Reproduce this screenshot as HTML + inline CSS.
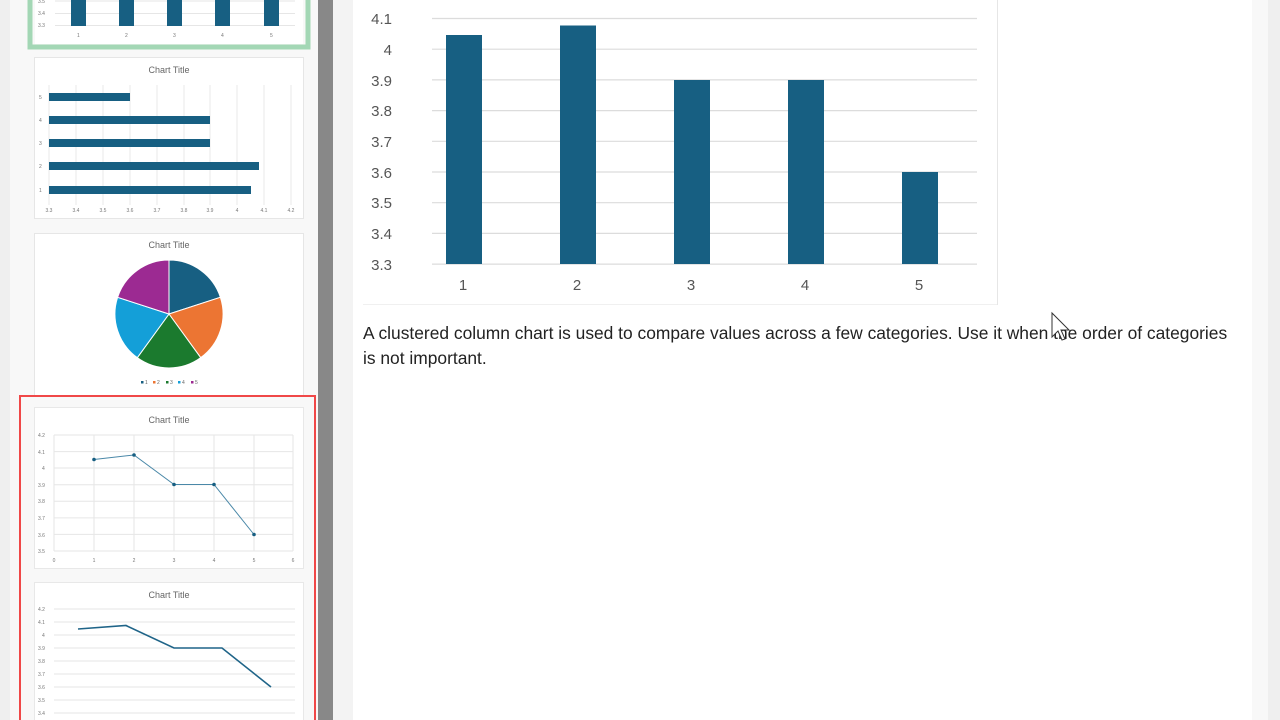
<!DOCTYPE html>
<html><head><meta charset="utf-8"><style>
html,body{margin:0;padding:0;width:1280px;height:720px;overflow:hidden;background:#fff}
svg{position:absolute;left:0;top:0}
p{position:absolute;left:363px;top:321px;width:900px;margin:0;font-family:"Liberation Sans",sans-serif;font-size:17.4px;line-height:25px;color:#222;white-space:nowrap}
</style></head><body>
<svg width="1280" height="720" font-family="Liberation Sans, sans-serif">
<rect x="0" y="0" width="10" height="720" fill="#efefef"/>
<rect x="10" y="0" width="308" height="720" fill="#f8f8f8"/>
<rect x="318" y="0" width="15" height="720" fill="#888"/>
<rect x="333" y="0" width="20" height="720" fill="#f3f3f3"/>
<rect x="1252" y="0" width="16" height="720" fill="#f8f8f8"/>
<rect x="1268" y="0" width="12" height="720" fill="#efefef"/>

<rect x="30" y="-10" width="278" height="57" fill="none" stroke="#a3d7b5" stroke-width="5"/>
<rect x="35" y="-5" width="268" height="49" fill="#fff"/>
<g stroke="#e6e6e6" stroke-width="1"><line x1="55" y1="1" x2="295" y2="1"/><line x1="55" y1="13.5" x2="295" y2="13.5"/><line x1="55" y1="25.5" x2="295" y2="25.5"/></g>
<g fill="#175f82"><rect x="71" y="0" width="15" height="26"/><rect x="119" y="0" width="15" height="26"/><rect x="167" y="0" width="15" height="26"/><rect x="215" y="0" width="15" height="26"/><rect x="264" y="0" width="15" height="26"/></g>
<g font-size="5" fill="#777"><text x="38" y="3">3.5</text><text x="38" y="15">3.4</text><text x="38" y="27">3.3</text>
<text x="77" y="37">1</text><text x="125" y="37">2</text><text x="173" y="37">3</text><text x="221" y="37">4</text><text x="270" y="37">5</text></g>

<rect x="34.5" y="57.5" width="269" height="161" fill="#fff" stroke="#e6e6e6"/>
<text x="169" y="73" font-size="9" fill="#666" text-anchor="middle">Chart Title</text>
<g stroke="#e8e8e8"><line x1="76" y1="85" x2="76" y2="205"/><line x1="103" y1="85" x2="103" y2="205"/><line x1="130" y1="85" x2="130" y2="205"/><line x1="157" y1="85" x2="157" y2="205"/><line x1="184" y1="85" x2="184" y2="205"/><line x1="210" y1="85" x2="210" y2="205"/><line x1="237" y1="85" x2="237" y2="205"/><line x1="264" y1="85" x2="264" y2="205"/><line x1="291" y1="85" x2="291" y2="205"/><line x1="49" y1="85" x2="49" y2="205"/></g>
<g fill="#175f82"><rect x="49" y="93" width="81" height="8"/><rect x="49" y="116" width="161" height="8"/><rect x="49" y="139" width="161" height="8"/><rect x="49" y="162" width="210" height="8"/><rect x="49" y="186" width="202" height="8"/></g>
<g font-size="5" fill="#777"><text x="39" y="99">5</text><text x="39" y="122">4</text><text x="39" y="145">3</text><text x="39" y="168">2</text><text x="39" y="192">1</text></g>
<g font-size="5" fill="#777" text-anchor="middle"><text x="49" y="212">3.3</text><text x="76" y="212">3.4</text><text x="103" y="212">3.5</text><text x="130" y="212">3.6</text><text x="157" y="212">3.7</text><text x="184" y="212">3.8</text><text x="210" y="212">3.9</text><text x="237" y="212">4</text><text x="264" y="212">4.1</text><text x="291" y="212">4.2</text></g>

<rect x="34.5" y="233.5" width="269" height="162" fill="#fff" stroke="#e6e6e6"/>
<text x="169" y="248" font-size="9" fill="#666" text-anchor="middle">Chart Title</text>
<g stroke="#fff" stroke-width="1">
<path d="M169 314 L169 260 A54 54 0 0 1 220.4 297.3Z" fill="#175f82"/>
<path d="M169 314 L220.4 297.3 A54 54 0 0 1 200.7 357.7Z" fill="#ec7533"/>
<path d="M169 314 L200.7 357.7 A54 54 0 0 1 137.3 357.7Z" fill="#1b7a2e"/>
<path d="M169 314 L137.3 357.7 A54 54 0 0 1 117.6 297.3Z" fill="#149fd8"/>
<path d="M169 314 L117.6 297.3 A54 54 0 0 1 169 260Z" fill="#9c2a92"/></g>
<g font-size="5" fill="#666"><rect x="141" y="381" width="2.5" height="2.5" fill="#175f82"/><text x="145" y="384">1</text><rect x="153" y="381" width="2.5" height="2.5" fill="#ec7533"/><text x="157" y="384">2</text><rect x="166" y="381" width="2.5" height="2.5" fill="#1b7a2e"/><text x="170" y="384">3</text><rect x="178" y="381" width="2.5" height="2.5" fill="#149fd8"/><text x="182" y="384">4</text><rect x="191" y="381" width="2.5" height="2.5" fill="#9c2a92"/><text x="195" y="384">5</text></g>

<rect x="20" y="396" width="295" height="330" fill="none" stroke="#f04848" stroke-width="2"/>
<rect x="34.5" y="407.5" width="269" height="161" fill="#fff" stroke="#e8e8e8"/>
<text x="169" y="423" font-size="9" fill="#666" text-anchor="middle">Chart Title</text>
<g stroke="#e6e6e6"><line x1="54" y1="435" x2="293" y2="435"/><line x1="54" y1="451.6" x2="293" y2="451.6"/><line x1="54" y1="468" x2="293" y2="468"/><line x1="54" y1="484.7" x2="293" y2="484.7"/><line x1="54" y1="501.3" x2="293" y2="501.3"/><line x1="54" y1="517.9" x2="293" y2="517.9"/><line x1="54" y1="534.4" x2="293" y2="534.4"/><line x1="54" y1="551" x2="293" y2="551"/>
<line x1="54" y1="435" x2="54" y2="551"/><line x1="94" y1="435" x2="94" y2="551"/><line x1="134" y1="435" x2="134" y2="551"/><line x1="174" y1="435" x2="174" y2="551"/><line x1="214" y1="435" x2="214" y2="551"/><line x1="254" y1="435" x2="254" y2="551"/><line x1="293" y1="435" x2="293" y2="551"/></g>
<polyline points="94,459.5 134,455 174,484.5 214,484.5 254,534.5" fill="none" stroke="#4a88a8" stroke-width="1"/>
<g fill="#175f82"><circle cx="94" cy="459.5" r="1.8"/><circle cx="134" cy="455" r="1.8"/><circle cx="174" cy="484.5" r="1.8"/><circle cx="214" cy="484.5" r="1.8"/><circle cx="254" cy="534.5" r="1.8"/></g>
<g font-size="5" fill="#777"><text x="38" y="437">4.2</text><text x="38" y="454">4.1</text><text x="42" y="470">4</text><text x="38" y="487">3.9</text><text x="38" y="503">3.8</text><text x="38" y="520">3.7</text><text x="38" y="537">3.6</text><text x="38" y="553">3.5</text></g>
<g font-size="5" fill="#777" text-anchor="middle"><text x="54" y="562">0</text><text x="94" y="562">1</text><text x="134" y="562">2</text><text x="174" y="562">3</text><text x="214" y="562">4</text><text x="254" y="562">5</text><text x="293" y="562">6</text></g>

<rect x="34.5" y="582.5" width="269" height="150" fill="#fff" stroke="#e8e8e8"/>
<text x="169" y="598" font-size="9" fill="#666" text-anchor="middle">Chart Title</text>
<g stroke="#e6e6e6"><line x1="54" y1="609" x2="295" y2="609"/><line x1="54" y1="622" x2="295" y2="622"/><line x1="54" y1="635" x2="295" y2="635"/><line x1="54" y1="648" x2="295" y2="648"/><line x1="54" y1="661" x2="295" y2="661"/><line x1="54" y1="674" x2="295" y2="674"/><line x1="54" y1="687" x2="295" y2="687"/><line x1="54" y1="700" x2="295" y2="700"/><line x1="54" y1="713" x2="295" y2="713"/></g>
<polyline points="78,629 126,625.5 174,648 222,648 271,687" fill="none" stroke="#1f6488" stroke-width="1.6"/>
<g font-size="5" fill="#777"><text x="38" y="611">4.2</text><text x="38" y="624">4.1</text><text x="42" y="637">4</text><text x="38" y="650">3.9</text><text x="38" y="663">3.8</text><text x="38" y="676">3.7</text><text x="38" y="689">3.6</text><text x="38" y="702">3.5</text><text x="38" y="715">3.4</text></g>

<line x1="997.5" y1="0" x2="997.5" y2="305" stroke="#e6e6e6"/>
<line x1="363" y1="304.5" x2="997" y2="304.5" stroke="#f0f0f0"/>
<g stroke="#dcdcdc" stroke-width="1.2"><line x1="432" y1="18.5" x2="977" y2="18.5"/><line x1="432" y1="49.2" x2="977" y2="49.2"/><line x1="432" y1="79.9" x2="977" y2="79.9"/><line x1="432" y1="110.6" x2="977" y2="110.6"/><line x1="432" y1="141.3" x2="977" y2="141.3"/><line x1="432" y1="172" x2="977" y2="172"/><line x1="432" y1="202.7" x2="977" y2="202.7"/><line x1="432" y1="233.4" x2="977" y2="233.4"/><line x1="432" y1="264.1" x2="977" y2="264.1"/></g>
<g fill="#175f82"><rect x="446" y="35" width="36" height="229"/><rect x="560" y="25.5" width="36" height="238.5"/><rect x="674" y="80" width="36" height="184"/><rect x="788" y="80" width="36" height="184"/><rect x="902" y="172" width="36" height="92"/></g>
<g font-size="15" fill="#555" text-anchor="end"><text x="392" y="24">4.1</text><text x="392" y="55">4</text><text x="392" y="86">3.9</text><text x="392" y="116">3.8</text><text x="392" y="147">3.7</text><text x="392" y="178">3.6</text><text x="392" y="208">3.5</text><text x="392" y="239">3.4</text><text x="392" y="270">3.3</text></g>
<g font-size="15" fill="#555" text-anchor="middle"><text x="463" y="290">1</text><text x="577" y="290">2</text><text x="691" y="290">3</text><text x="805" y="290">4</text><text x="919" y="290">5</text></g>
</svg>
<p>A clustered column chart is used to compare values across a few categories. Use it when the order of categories<br>is not important.</p>
<svg width="1280" height="720" style="pointer-events:none"><path d="M1052 313 L1052 337 L1058 331 L1062 340 L1065 339 L1061 330 L1069 330 Z" fill="#fff" stroke="#333" stroke-width="1"/></svg>
</body></html>
